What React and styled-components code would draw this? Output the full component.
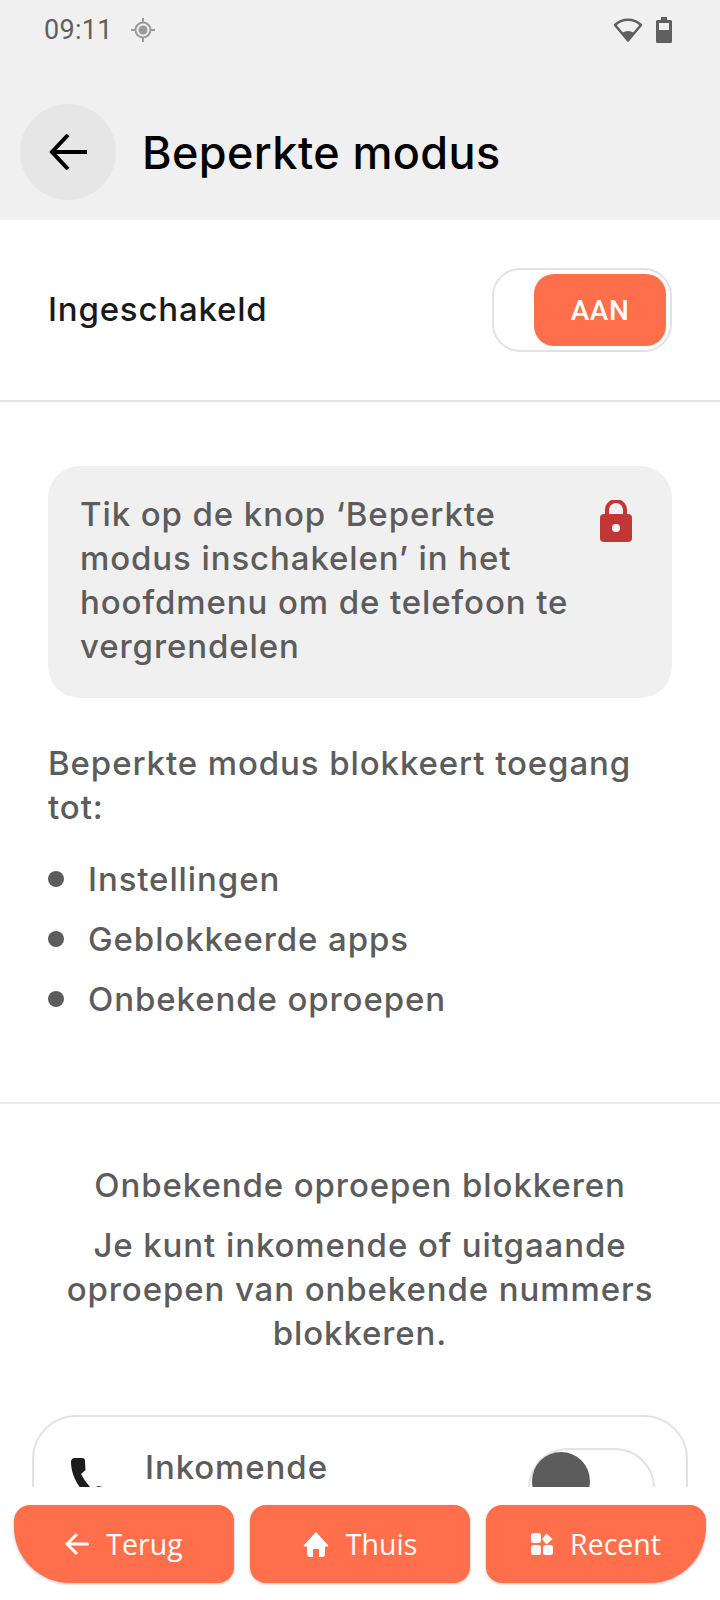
import React from 'react'
import styled, { createGlobalStyle } from 'styled-components'

const Global = createGlobalStyle`
  html, body { margin: 0; padding: 0; background: #fff; }
  * { box-sizing: border-box; }
`

const Screen = styled.div`
  width: 720px;
  height: 1600px;
  display: flex;
  flex-direction: column;
  overflow: hidden;
  font-family: Inter, "Liberation Sans", sans-serif;
  background: #fff;
`

const Top = styled.header`
  height: 220px;
  flex: none;
  background: #f0f0f0;
  display: flex;
  flex-direction: column;
`

const StatusBar = styled.div`
  height: 60px;
  padding: 0 48px 0 44px;
  display: flex;
  align-items: center;
  color: #5f5f5f;
  font-family: Roboto, sans-serif;
  font-size: 27px;
  letter-spacing: 0.3px;
`

const StatusIcons = styled.div`
  margin-left: auto;
  display: flex;
  align-items: center;
  gap: 13px;
`

const Loc = styled.svg`
  margin-left: 18px;
`

const TitleBar = styled.div`
  margin-top: 44px;
  padding-left: 20px;
  display: flex;
  align-items: center;
  gap: 26px;
`

const BackCircle = styled.div`
  width: 96px;
  height: 96px;
  border-radius: 50%;
  background: #e6e6e6;
  display: flex;
  align-items: center;
  justify-content: center;
`

const Title = styled.h1`
  margin: 0;
  font-size: 45px;
  font-weight: 500;
  letter-spacing: 0.4px;
  color: #000;
`

const Scroller = styled.main`
  flex: 1;
  min-height: 0;
  overflow: hidden;
`

const SwitchRow = styled.section`
  height: 182px;
  padding: 48px 48px 0;
  display: flex;
  justify-content: space-between;
  border-bottom: 2px solid #e2e2e2;
`

const SwitchLabel = styled.span`
  font-size: 33px;
  font-weight: 550;
  letter-spacing: 0.8px;
  color: #1a1a1a;
  line-height: 82px;
`

const Toggle = styled.div`
  width: 180px;
  height: 84px;
  border: 2px solid #e2e2e2;
  border-radius: 28px;
  padding: 4px;
  display: flex;
  justify-content: flex-end;
`

const Knob = styled.div`
  width: 132px;
  height: 72px;
  border-radius: 20px;
  background: #ff6f4b;
  color: #fff;
  font-family: Roboto, sans-serif;
  font-weight: 500;
  font-size: 28px;
  letter-spacing: 0.5px;
  display: flex;
  align-items: center;
  justify-content: center;
`

const Info = styled.section`
  padding: 64px 48px 81px;
  border-bottom: 2px solid #ececec;
`

const Notice = styled.div`
  background: #f0f0f0;
  border-radius: 32px;
  height: 232px;
  padding: 26px 32px;
  display: flex;
  justify-content: space-between;
`

const BodyText = styled.div`
  font-size: 33px;
  line-height: 44px;
  font-weight: 550;
  letter-spacing: 0.9px;
  color: #5c5c5c;
`

const NoticeText = styled(BodyText)`
  width: 500px;
`

const Lock = styled.svg`
  margin-top: 8px;
  margin-right: 8px;
  flex: none;
`

const Lead = styled(BodyText)`
  margin-top: 43px;
`

const Bullets = styled.ul`
  margin: 28px 0 0;
  padding: 0;
  list-style: none;
  display: flex;
  flex-direction: column;
  gap: 16px;
`

const Bullet = styled(BodyText).attrs({ as: 'li' })`
  display: flex;
  align-items: center;
  gap: 24px;

  &::before {
    content: '';
    width: 16px;
    height: 16px;
    border-radius: 50%;
    background: #5c5c5c;
  }
`

const Blocking = styled(BodyText)`
  padding: 59px 48px 0;
  text-align: center;
`

const BlockingText = styled.p`
  margin: 16px 0 0;
`

const CallCard = styled.div`
  margin: 60px 32px 0;
  height: 200px;
  border: 2px solid #e2e2e2;
  border-radius: 44px;
  padding: 28px 31px 0 37px;
  display: flex;
  align-items: flex-start;
`

const Phone = styled.svg`
  margin-top: 13px;
  flex: none;
`

const CallLabel = styled(BodyText)`
  margin-left: 30px;
`

const Small = styled.div`
  margin-left: auto;
  margin-top: 3px;
  width: 127px;
  height: 84px;
  border: 2px solid #e2e2e2;
  border-radius: 40px;
  padding: 2px;
`

const Dot = styled.div`
  width: 58px;
  height: 58px;
  border-radius: 50%;
  background: #5c5c5c;
`

const Footer = styled.nav`
  flex: none;
  height: 113px;
  padding: 18px 14px 0;
  display: flex;
  gap: 16px;
  align-items: flex-start;
  background: #fff;
`

const NavButton = styled.div`
  width: 220px;
  height: 78px;
  background: #ff6f4b;
  color: #fff;
  display: flex;
  align-items: center;
  justify-content: center;
  gap: 17px;
  font-family: "Open Sans", sans-serif;
  font-size: 28.5px;
  font-weight: 500;
  box-shadow: 0 1px 3px rgba(0, 0, 0, 0.25);
  border-radius: 16px 16px ${p => (p.$end === 'right' ? '56px' : '16px')} ${p => (p.$end === 'left' ? '56px' : '16px')};
`

export default function App() {
  return (
    <Screen>
      <Global />
      <Top>
        <StatusBar>
          <span>09:11</span>
          <Loc width="24" height="24" viewBox="0 0 24 24">
            <circle cx="12" cy="12" r="4.500" fill="#9a9a9a" />
            <circle cx="12" cy="12" r="7.500" fill="none" stroke="#9a9a9a" strokeWidth="2" />
            <path d="M12 0v4M12 20v4M0 12h4M20 12h4" stroke="#9a9a9a" strokeWidth="2" />
          </Loc>
          <StatusIcons>
            <svg width="30" height="26" viewBox="0 0 30 26">
              <path d="M15 23.500L2 8C9 1 21 1 28 8z" fill="none" stroke="#5f5f5f" strokeWidth="2.500" strokeLinejoin="round" />
              <path d="M15 24.500L8.500 16.500c3.500-3.500 9.500-3.500 13 0z" fill="#5f5f5f" />
            </svg>
            <svg width="16" height="26" viewBox="0 0 16 26">
              <path d="M5 0h6v3h3.500a1.500 1.500 0 0 1 1.500 1.500V24.500a1.500 1.500 0 0 1-1.500 1.500H1.500A1.500 1.500 0 0 1 0 24.500V4.500A1.500 1.500 0 0 1 1.500 3H5z" fill="#5f5f5f" />
              <rect x="3" y="6" width="10" height="7" fill="#f0f0f0" />
            </svg>
          </StatusIcons>
        </StatusBar>
        <TitleBar>
          <BackCircle>
            <svg width="38" height="36" viewBox="0 0 38 36" fill="none" stroke="#000" strokeWidth="4">
              <path d="M38 18H3M19 1L3 18l16 17" />
            </svg>
          </BackCircle>
          <Title>Beperkte modus</Title>
        </TitleBar>
      </Top>
      <Scroller>
        <SwitchRow>
          <SwitchLabel>Ingeschakeld</SwitchLabel>
          <Toggle><Knob>AAN</Knob></Toggle>
        </SwitchRow>
        <Info>
          <Notice>
            <NoticeText>Tik op de knop ‘Beperkte modus inschakelen’ in het hoofdmenu om de telefoon te vergrendelen</NoticeText>
            <Lock width="32" height="42" viewBox="0 0 32 42">
              <path d="M7 16V10a9 9 0 0 1 18 0v6" fill="none" stroke="#c23636" strokeWidth="4" />
              <rect y="14" width="32" height="28" rx="4" fill="#c23636" />
              <circle cx="16" cy="28" r="4" fill="#fff" />
            </Lock>
          </Notice>
          <Lead>Beperkte modus blokkeert toegang tot:</Lead>
          <Bullets>
            <Bullet>Instellingen</Bullet>
            <Bullet>Geblokkeerde apps</Bullet>
            <Bullet>Onbekende oproepen</Bullet>
          </Bullets>
        </Info>
        <Blocking>
          <div>Onbekende oproepen blokkeren</div>
          <BlockingText>Je kunt inkomende of uitgaande oproepen van onbekende nummers blokkeren.</BlockingText>
        </Blocking>
        <CallCard>
          <Phone width="44" height="47" viewBox="0 0 44 47" fill="#1c1c1e">
            <path d="M0 4Q0 0 4 0H11Q14 0 14 3L14.500 12L10 16Q14 24 21 31L27 28L41 31Q44 32 44 35V44Q44 47 41 47C18 47 0 24 0 4Z" />
          </Phone>
          <CallLabel>Inkomende</CallLabel>
          <Small><Dot /></Small>
        </CallCard>
      </Scroller>
      <Footer>
        <NavButton $end="left">
          <svg width="24" height="22" viewBox="0 0 24 22" fill="none" stroke="#fff" strokeWidth="3" strokeLinecap="round" strokeLinejoin="round">
            <path d="M22.500 11H2M11 2l-9 9 9 9" />
          </svg>
          Terug
        </NavButton>
        <NavButton>
          <svg width="26" height="25" viewBox="0 0 26 25" fill="#fff">
            <path d="M13 0L1 13c-.6.800 0 1.500 1 1.500h2V22a3 3 0 0 0 3 3h3v-8h6v8h3a3 3 0 0 0 3-3v-7.500h2c1 0 1.600-.7 1-1.500z" />
          </svg>
          Thuis
        </NavButton>
        <NavButton $end="right">
          <svg width="22" height="22" viewBox="0 0 22 22" fill="#fff">
            <rect x="0" y="0" width="10" height="10" rx="2.500" />
            <path d="M15.500 0.500L21.500 6 15.500 11.500 11 6z" />
            <rect x="0" y="12" width="10" height="10" rx="2.500" />
            <rect x="12" y="12" width="10" height="10" rx="2.500" />
          </svg>
          Recent
        </NavButton>
      </Footer>
    </Screen>
  )
}
